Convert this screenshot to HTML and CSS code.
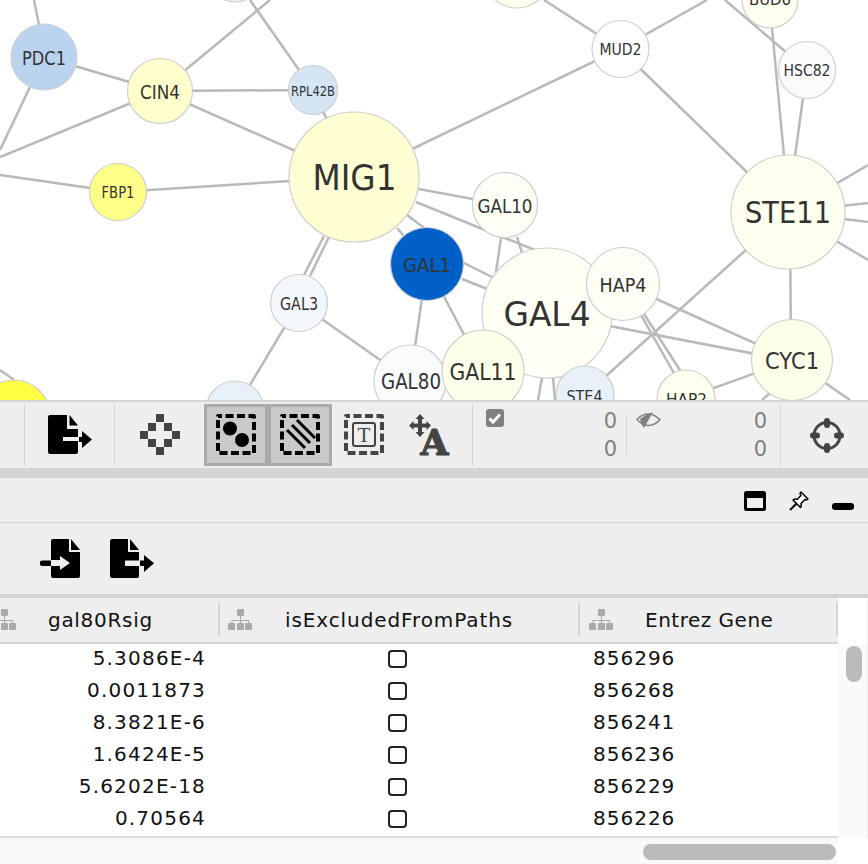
FILE: index.html
```html
<!DOCTYPE html>
<html lang="en">
<head>
<meta charset="utf-8">
<title>Network view</title>
<link rel="stylesheet" href="styles.css">
</head>
<body>
<div class="app">
  <svg class="network" width="868" height="400" viewBox="0 0 868 400">
    <g class="edges">
      <line x1="34" y1="0" x2="39" y2="25"/><line x1="44" y1="57" x2="160" y2="91"/><line x1="30" y1="87" x2="0" y2="150"/>
      <line x1="160" y1="91" x2="0" y2="157"/><line x1="160" y1="91" x2="270" y2="0"/><line x1="250" y1="0" x2="313" y2="90"/>
      <line x1="160" y1="91" x2="313" y2="90"/><line x1="160" y1="91" x2="354" y2="177"/><line x1="313" y1="90" x2="354" y2="177"/>
      <line x1="0" y1="175" x2="118" y2="192"/><line x1="118" y1="192" x2="354" y2="177"/><line x1="354" y1="177" x2="620" y2="49"/>
      <line x1="354" y1="177" x2="505" y2="205"/><line x1="416" y1="202" x2="547" y2="255"/>
      <line x1="407" y1="215" x2="440" y2="240"/><line x1="397" y1="228" x2="420" y2="255"/>
      <line x1="324" y1="236" x2="304" y2="275"/><line x1="329" y1="237" x2="310" y2="276"/>
      <line x1="427" y1="264" x2="410" y2="381"/><line x1="462" y1="262" x2="500" y2="281"/><line x1="462" y1="279" x2="495" y2="292"/>
      <line x1="427" y1="264" x2="483" y2="371"/><line x1="299" y1="303" x2="410" y2="381"/><line x1="299" y1="303" x2="235" y2="410"/>
      <line x1="544" y1="0" x2="620" y2="49"/><line x1="620" y1="49" x2="707" y2="0"/><line x1="620" y1="49" x2="788" y2="212"/>
      <line x1="725" y1="0" x2="807" y2="70"/><line x1="772" y1="28" x2="784" y2="156"/><line x1="803" y1="98" x2="795" y2="156"/>
      <line x1="788" y1="212" x2="868" y2="165"/><line x1="788" y1="212" x2="868" y2="203"/><line x1="788" y1="212" x2="868" y2="222"/>
      <line x1="788" y1="212" x2="868" y2="260"/><line x1="790" y1="212" x2="791" y2="360"/><line x1="788" y1="212" x2="585" y2="395"/>
      <line x1="623" y1="284" x2="792" y2="360"/><line x1="547" y1="314" x2="792" y2="361"/><line x1="641" y1="315" x2="675" y2="375"/>
      <line x1="644" y1="314" x2="683" y2="375"/><line x1="686" y1="398" x2="792" y2="360"/><line x1="792" y1="360" x2="850" y2="400"/>
      <line x1="770" y1="393" x2="762" y2="400"/><line x1="501" y1="238" x2="496" y2="272"/><line x1="517" y1="237" x2="522" y2="253"/>
      <line x1="542" y1="378" x2="538" y2="400"/><line x1="553" y1="378" x2="555" y2="400"/><line x1="515" y1="395" x2="510" y2="400"/>
      <line x1="14" y1="380" x2="0" y2="370"/>
    </g>
    <g class="nodes">
      <circle cx="235" cy="-26" r="28" fill="#e8f0f9"/>
      <circle cx="517" cy="-25" r="33" fill="#fffff0"/>
      <circle cx="770" cy="0" r="28" fill="#fffff0"/>
      <circle cx="44" cy="57" r="33" fill="#bad4ef"/>
      <circle cx="160" cy="91" r="32.5" fill="#ffffcc"/>
      <circle cx="313" cy="90" r="24.5" fill="#d5e5f6"/>
      <circle cx="354" cy="177" r="65" fill="#ffffd3"/>
      <circle cx="118" cy="192" r="28.5" fill="#ffff88"/>
      <circle cx="14" cy="416" r="36" fill="#ffff44"/>
      <circle cx="235" cy="410" r="29" fill="#e8f0f9"/>
      <circle cx="299" cy="303" r="28.5" fill="#f3f7fb"/>
      <circle cx="410" cy="381" r="36" fill="#f9fbfd"/>
      <circle cx="427" cy="264" r="36.5" fill="#0060c8"/>
      <circle cx="620.5" cy="49" r="28.5" fill="#ffffff"/>
      <circle cx="807" cy="70" r="28.5" fill="#fafbfd"/>
      <circle cx="788" cy="212" r="57" fill="#feffee"/>
      <circle cx="505" cy="205" r="32.5" fill="#fefef6"/>
      <circle cx="547" cy="313" r="65" fill="#fffff5"/>
      <circle cx="623" cy="284" r="36.5" fill="#fefef6"/>
      <circle cx="792" cy="360" r="40.5" fill="#feffea"/>
      <circle cx="483" cy="371" r="41" fill="#feffea"/>
      <circle cx="585" cy="395" r="29" fill="#e8f0f9"/>
      <circle cx="686" cy="399" r="29" fill="#fffff0"/>
    </g>
    <g class="labels">
      <text x="770" y="0" font-size="15" textLength="42" lengthAdjust="spacingAndGlyphs">BUD6</text>
      <text x="44" y="57.500" font-size="20" textLength="44" lengthAdjust="spacingAndGlyphs">PDC1</text>
      <text x="160" y="91.500" font-size="19" textLength="40" lengthAdjust="spacingAndGlyphs">CIN4</text>
      <text x="313" y="90.500" font-size="14" textLength="44" lengthAdjust="spacingAndGlyphs">RPL42B</text>
      <text x="354.500" y="178" font-size="35" textLength="84" lengthAdjust="spacingAndGlyphs">MIG1</text>
      <text x="118" y="193" font-size="15.5" textLength="33" lengthAdjust="spacingAndGlyphs">FBP1</text>
      <text x="299" y="303.500" font-size="17" textLength="38" lengthAdjust="spacingAndGlyphs">GAL3</text>
      <text x="411" y="382" font-size="21" textLength="60" lengthAdjust="spacingAndGlyphs">GAL80</text>
      <text x="427" y="265" font-size="19" textLength="48" lengthAdjust="spacingAndGlyphs">GAL1</text>
      <text x="620.5" y="49.500" font-size="16" textLength="42" lengthAdjust="spacingAndGlyphs">MUD2</text>
      <text x="807" y="70" font-size="16.5" textLength="47" lengthAdjust="spacingAndGlyphs">HSC82</text>
      <text x="788" y="212.500" font-size="30" textLength="86" lengthAdjust="spacingAndGlyphs">STE11</text>
      <text x="505" y="205.500" font-size="20" textLength="55" lengthAdjust="spacingAndGlyphs">GAL10</text>
      <text x="547" y="314" font-size="34" textLength="87" lengthAdjust="spacingAndGlyphs">GAL4</text>
      <text x="623" y="284.500" font-size="20" textLength="47" lengthAdjust="spacingAndGlyphs">HAP4</text>
      <text x="792" y="360.500" font-size="23" textLength="54" lengthAdjust="spacingAndGlyphs">CYC1</text>
      <text x="483" y="371.500" font-size="23" textLength="67" lengthAdjust="spacingAndGlyphs">GAL11</text>
      <text x="584.5" y="396" font-size="16" textLength="36" lengthAdjust="spacingAndGlyphs">STE4</text>
      <text x="686.5" y="399" font-size="16" textLength="41" lengthAdjust="spacingAndGlyphs">HAP2</text>
    </g>
  </svg>

  <div class="toolbar main-toolbar">
    <div class="lead"></div>
    <div class="sep"></div>
    <svg class="slot slot-export" width="89" height="66" viewBox="25 402 89 66">
      <path class="ink" d="M50 415H67V429H78V437H63V441H78V452a2 2 0 0 1-2 2H50a2 2 0 0 1-2-2V417a2 2 0 0 1 2-2Z"/>
      <path class="ink" d="M69.5 415 78 425.500H69.500Z"/>
      <path class="ink" d="M79 437H82V431L92 439.500 82 448V442H79Z"/>
    </svg>
    <div class="sep"></div>
    <svg class="slot slot-first" width="89" height="66" viewBox="115 402 89 66">
      <g class="grey">
        <rect x="156" y="414" width="8" height="8"/><rect x="148" y="423" width="8" height="8"/><rect x="164" y="423" width="8" height="8"/>
        <rect x="140" y="431" width="8" height="8"/><rect x="172" y="431" width="8" height="8"/><rect x="148" y="439" width="8" height="8"/>
        <rect x="164" y="439" width="8" height="8"/><rect x="156" y="447" width="8" height="8"/>
      </g>
    </svg>
    <div class="toggle">
      <svg width="58" height="56" viewBox="207 407 58 56">
        <rect class="dash" x="218" y="416" width="36" height="37"/>
        <circle class="ink" cx="230" cy="428.500" r="7"/><circle class="ink" cx="242" cy="440" r="7"/>
      </svg>
    </div>
    <div class="toggle">
      <svg width="58" height="56" viewBox="271 407 58 56">
        <rect class="dash" x="282" y="416" width="36" height="37"/>
        <path class="hatch" d="M287 430 305 448M292 425 310 443M297 420 315 438"/>
      </svg>
    </div>
    <svg class="slot slot-text" width="64" height="66" viewBox="332 402 64 66">
      <rect class="dash grey-dash" x="346" y="416" width="36" height="37"/>
      <rect class="inner" x="353" y="423" width="22" height="23" rx="2"/>
      <text class="t-glyph" x="364" y="435">T</text>
    </svg>
    <svg class="slot slot-move" width="76" height="66" viewBox="396 402 76 66">
      <path class="grey" d="M420 414 424.500 419H422V423.500H426.500V421L431 425.500 426.500 430V427.500H422V432H424.500L420 437 415.500 432H418V427.500H413.500V430L409 425.500 413.500 421V423.500H418V419H415.500Z"/>
      <text class="a-glyph" x="434.500" y="454.500">A</text>
    </svg>
    <div class="sep"></div>
    <div class="stat stat-selected">
      <svg class="stat-icon" width="18" height="18" viewBox="0 0 18 18">
        <rect class="stat-fill" width="18" height="18" rx="3"/>
        <path class="check" d="M3.500 9.500 7 13 14 5.500"/>
      </svg>
      <div class="counts"><span>0</span><span>0</span></div>
    </div>
    <div class="stat-sep"></div>
    <div class="stat stat-hidden">
      <svg class="stat-icon" width="25" height="17" viewBox="0 0 25 17">
        <path class="eye" d="M1 7.500C5 3 10 1.500 14 2 18 2.500 21 5 24 7.500 21 11 17 13.500 12 13.500 8 13 4 11 1 7.500Z"/>
        <path class="eye-fill" d="M17 0 8 16 5.500 12.500 4 7 9 3.500Z"/>
      </svg>
      <div class="counts"><span>0</span><span>0</span></div>
    </div>
    <div class="sep"></div>
    <svg class="slot" width="87" height="66" viewBox="781 402 87 66">
      <circle class="ring" cx="827" cy="435.500" r="13"/>
      <path class="ticks" d="M827 421V425M827 446V450M813 435.500H817M837 435.500H841"/>
    </svg>
  </div>

  <div class="band"></div>

  <div class="panel-header">
    <svg class="hdr-win" width="22" height="20" viewBox="0 0 22 20">
      <rect class="win" x="1.500" y="1.500" width="19" height="17" rx="1"/>
      <rect class="ink" x="1" y="1" width="20" height="6"/>
    </svg>
    <svg class="hdr-pin" width="22" height="22" viewBox="0 0 22 22">
      <path class="pin" d="M13 2 20 9 18.500 10 17 9.500 13 13.500C13.500 15 13.500 16.500 12.500 17.500L5 10C6 9 7.500 8.500 9 9.500L13 5.500 12 3.500Z"/>
      <path class="pin-needle" d="M8.500 13.500 2 20"/>
    </svg>
    <div class="hdr-min"></div>
  </div>

  <div class="toolbar table-toolbar">
    <svg width="50" height="71" class="tt-import" viewBox="40 523 50 71">
      <path class="ink" d="M53 539H69V552H80V576a2 2 0 0 1-2 2H53a2 2 0 0 1-2-2V566H60V570L70 563 60 556V560H51V541a2 2 0 0 1 2-2Z"/>
      <path class="ink" d="M71 539 80 550H71Z"/>
      <path class="ink" d="M42.500 560.500H51V566H42.500a2.700 2.700 0 0 1 0-5.500Z"/>
    </svg>
    <svg width="50" height="71" class="tt-export" viewBox="105 523 50 71">
      <path class="ink" d="M112 539H128V552H139V560.500H125V566H139V576a2 2 0 0 1-2 2H112a2 2 0 0 1-2-2V541a2 2 0 0 1 2-2Z"/>
      <path class="ink" d="M130 539 139 550H130Z"/>
      <path class="ink" d="M140 560.500H144V555L154 563.200 144 572V566H140Z"/>
    </svg>
  </div>

  <div class="band band-thin"></div>

  <div class="table-wrap">
    <div class="table-main">
      <div class="thead">
        <div class="th th-first">
          <svg class="tree" width="24" height="22" viewBox="0 0 24 22"><use href="#tree-icon"/></svg>
          <span>gal80Rsig</span>
        </div>
        <div class="th th-second">
          <svg class="tree" width="24" height="22" viewBox="0 0 24 22"><use href="#tree-icon"/></svg>
          <span>isExcludedFromPaths</span>
        </div>
        <div class="th th-third">
          <svg class="tree" width="24" height="22" viewBox="0 0 24 22"><use href="#tree-icon"/></svg>
          <span>Entrez Gene</span>
        </div>
      </div>
      <div class="tbody">
        <div class="tr"><div class="td num">5.3086E-4</div><div class="td box"><i></i></div><div class="td gene">856296</div></div>
        <div class="tr"><div class="td num">0.0011873</div><div class="td box"><i></i></div><div class="td gene">856268</div></div>
        <div class="tr"><div class="td num">8.3821E-6</div><div class="td box"><i></i></div><div class="td gene">856241</div></div>
        <div class="tr"><div class="td num">1.6424E-5</div><div class="td box"><i></i></div><div class="td gene">856236</div></div>
        <div class="tr"><div class="td num">5.6202E-18</div><div class="td box"><i></i></div><div class="td gene">856229</div></div>
        <div class="tr"><div class="td num">0.70564</div><div class="td box"><i></i></div><div class="td gene">856226</div></div>
      </div>
      <div class="hscroll"><div class="hthumb"></div></div>
    </div>
    <div class="vscroll"><div class="vthumb"></div></div>
  </div>
</div>
<svg class="defs" width="0" height="0">
  <defs>
    <g id="tree-icon">
      <rect x="9" y="0" width="7" height="7" rx="1"/>
      <rect x="0" y="14" width="7" height="7" rx="1"/><rect x="9" y="14" width="7" height="7" rx="1"/><rect x="17" y="14" width="7" height="7" rx="1"/>
      <path d="M12 7V11H3.500V14H4.500V12H12V14H13V12H20V14H21V11H13V7Z"/>
    </g>
  </defs>
</svg>
</body>
</html>
```

FILE: styles.css
```css
* { box-sizing: border-box; }
html, body { margin: 0; padding: 0; background: #fff; }
body { width: 868px; height: 864px; overflow: hidden; font-family: "DejaVu Sans", sans-serif; color: #111; }
.app { width: 868px; height: 864px; display: flex; flex-direction: column; overflow: hidden; }
.defs { position: absolute; }

.network { display: block; flex: none; background: #fff; }
.edges line { stroke: #b9b9b9; stroke-width: 2.5; }
.nodes circle { stroke: #cfcfcf; stroke-width: 1.2; }
.labels text { font-family: "DejaVu Sans", sans-serif; fill: #333; text-anchor: middle; dominant-baseline: central; }

.toolbar { display: flex; align-items: center; background: #eee; flex: none; }
.main-toolbar { height: 68px; border-top: 2px solid #d4d4d4; }
.lead { width: 24px; flex: none; }
.sep { width: 1px; height: 62px; background: #d6d6d6; flex: none; }
.slot { display: block; flex: none; }
.ink { fill: #000; }
.grey { fill: #444; }
.toggle { width: 64px; height: 62px; background: #c9c9c9; border: 3px solid #aaa; flex: none; }
.toggle svg { display: block; }
.dash { fill: none; stroke: #000; stroke-width: 4; stroke-dasharray: 8 3.500; stroke-dashoffset: 4; stroke-linejoin: round; }
.grey-dash { stroke: #444; }
.hatch { fill: none; stroke: #000; stroke-width: 3; }
.inner { fill: none; stroke: #444; stroke-width: 2; }
.t-glyph { font-family: "Liberation Serif", serif; font-size: 21px; fill: #444; text-anchor: middle; dominant-baseline: central; }
.a-glyph { font-family: "DejaVu Serif", serif; font-weight: 700; font-size: 36px; fill: #444; stroke: #444; stroke-width: 1.200; text-anchor: middle; }

.stat { height: 66px; display: flex; justify-content: space-between; flex: none; }
.stat-selected { width: 153px; padding: 7px 9px 0 13px; }
.stat-hidden { width: 153px; padding: 10px 13px 0 9px; }
.stat-selected .counts { margin-top: -2px; }
.stat-hidden .counts { margin-top: -5px; }
.stat-icon { display: block; flex: none; }
.stat-fill { fill: #808080; }
.check { fill: none; stroke: #fff; stroke-width: 3; }
.eye { fill: none; stroke: #808080; stroke-width: 1.500; }
.eye-fill { fill: #808080; }
.counts { display: flex; flex-direction: column; align-items: flex-end; font-size: 21px; line-height: 28px; color: #808080; }
.stat-sep { width: 1px; height: 40px; background: #d6d6d6; flex: none; }
.ring { fill: none; stroke: #444; stroke-width: 3; }
.ticks { fill: none; stroke: #444; stroke-width: 6; stroke-linecap: round; }

.band { height: 10px; background: #d4d4d4; flex: none; }
.band-thin { height: 4px; }

.panel-header { height: 45px; flex: none; background: #eee; border-bottom: 1.500px solid #d4d4d4; display: flex; align-items: flex-start; padding: 13px 14px 0 0; justify-content: flex-end; }
.win { fill: none; stroke: #000; stroke-width: 3; }
.hdr-win { display: block; margin-right: 22px; }
.hdr-pin { display: block; margin-right: 22px; margin-top: -1px; }
.pin { fill: #fff; stroke: #000; stroke-width: 1.500; stroke-linejoin: round; }
.pin-needle { fill: none; stroke: #000; stroke-width: 2; }
.hdr-min { width: 22px; height: 7px; margin-top: 12px; background: #000; border-radius: 3px; }

.table-toolbar { height: 71px; }
.tt-import { display: block; margin-left: 40px; }
.tt-export { display: block; margin-left: 15px; }

.table-wrap { flex: 1; display: flex; min-height: 0; background: #fff; }
.table-main { width: 838px; flex: none; display: flex; flex-direction: column; }
.thead { height: 46px; flex: none; display: grid; grid-template-columns: 220px 360px 258px; background: #eee; border-bottom: 2px solid #d4d4d4; }
.th { display: flex; align-items: center; height: 44px; position: relative; font-size: 20px; letter-spacing: 0.7px; color: #111; overflow: hidden; white-space: nowrap; }
.th::after { content: ""; position: absolute; right: 0; top: 4px; bottom: 6px; width: 2px; background: #d6d6d6; }
.tree { display: block; flex: none; fill: #aaa; }
.th-first { padding-left: 48px; }
.th-first .tree { position: absolute; left: -8px; top: 11px; }
.th-second { padding-left: 8px; }
.th-second span { margin-left: 33px; letter-spacing: 0.9px; }
.th-third { padding-left: 9px; }
.th-third span { margin-left: 32px; letter-spacing: 0.5px; }

.tbody { height: 192px; flex: none; }
.tr { height: 32px; display: grid; grid-template-columns: 220px 360px 258px; align-items: center; font-size: 20px; letter-spacing: 1px; color: #111; }
.td { white-space: nowrap; }
.num { text-align: right; padding-right: 14px; margin-bottom: 4px; letter-spacing: 1.2px; }
.box { display: flex; padding-left: 168px; margin-bottom: 2px; }
.box i { display: block; width: 19px; height: 18px; border: 2px solid #222; border-radius: 4px; background: #fff; }
.gene { padding-left: 13px; margin-bottom: 4px; }

.hscroll { flex: 1; background: #f9f9f9; border-top: 2px solid #ddd; padding: 6px 2px 0 643px; }
.hthumb { height: 16px; background: #bbb; border-radius: 8px; }

.vscroll { width: 30px; flex: none; height: 240px; padding: 48px 6px 0 8px; background: linear-gradient(#fff 46px, #fafafa 46px); border-right: 1px solid #eee; }
.vthumb { width: 16px; height: 36px; background: #bbb; border-radius: 8px; }
```
